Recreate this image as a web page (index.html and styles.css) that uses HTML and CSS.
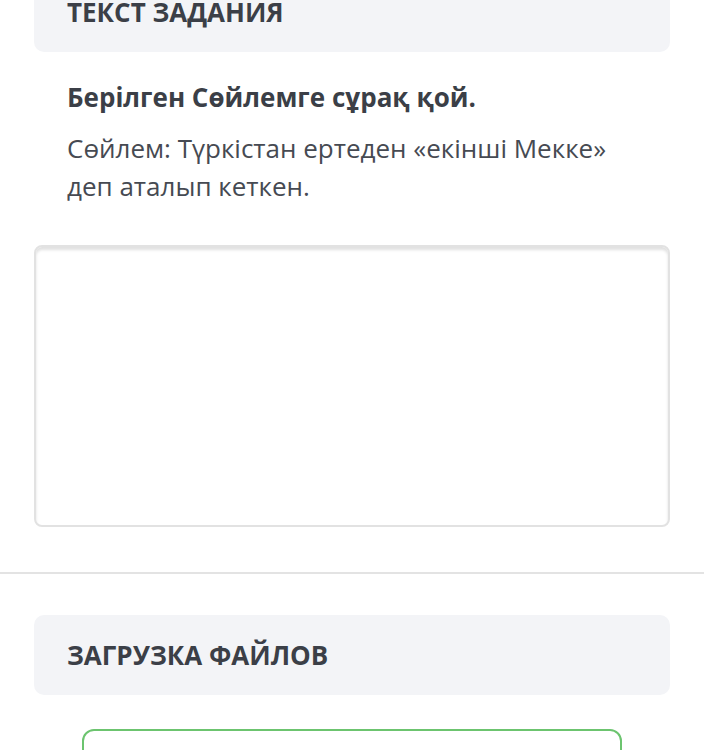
FILE: index.html
```html
<!DOCTYPE html>
<html lang="kk">
<head>
    <meta charset="UTF-8">
    <title>Тапсырма</title>
    <link rel="stylesheet" href="styles.css">
</head>
<body>
    <div class="page">
        <section class="task">
            <div class="panel-head">Текст задания</div>
            <div class="task-body">
                <p class="task-title">Берілген Сөйлемге сұрақ қой.</p>
                <p class="task-text">Сөйлем: Түркістан ертеден «екінші Мекке» деп аталып кеткен.</p>
            </div>
            <textarea class="answer"></textarea>
        </section>
        <hr class="divider">
        <section class="upload">
            <div class="panel-head">Загрузка файлов</div>
            <div class="dropzone"></div>
        </section>
    </div>
</body>
</html>
```

FILE: styles.css
```css
:root {
    --text: #3b3f47;
    --panel: #f3f4f7;
    --line: #e3e3e3;
    --green: #6cc46f;
}

body {
    margin: 0;
    padding: 0;
    background-color: #ffffff;
    font-family: "Open Sans", "Noto Sans", sans-serif;
    color: var(--text);
    overflow: hidden;
}
.page {
    margin-top: -28px;
}
.task,
.upload {
    padding: 0 34px;
}
.panel-head {
    background-color: var(--panel);
    border-radius: 10px;
    height: 80px;
    padding: 0 33px;
    display: flex;
    align-items: center;
    font-size: 26px;
    font-weight: 700;
    text-transform: uppercase;
}
.task-body {
    padding: 28px 33px 40px;
}
.task-title {
    margin: 0 0 15px;
    font-size: 26px;
    font-weight: 700;
    line-height: 34px;
}
.task-text {
    margin: 0;
    font-size: 26px;
    line-height: 38px;
    color: #464a52;
    max-width: 560px;
}
.answer {
    display: block;
    box-sizing: border-box;
    width: 100%;
    height: 282px;
    border: 2px solid #e2e2e2;
    border-radius: 8px;
    box-shadow: inset 0 3px 3px rgba(0, 0, 0, 0.12);
    resize: none;
    margin: 0;
}
.divider {
    border: 0;
    border-top: 2px solid var(--line);
    margin: 45px 0 41px;
}
.dropzone {
    margin: 34px 48px 0;
    height: 120px;
    border: 2px solid var(--green);
    border-radius: 12px;
}
```
